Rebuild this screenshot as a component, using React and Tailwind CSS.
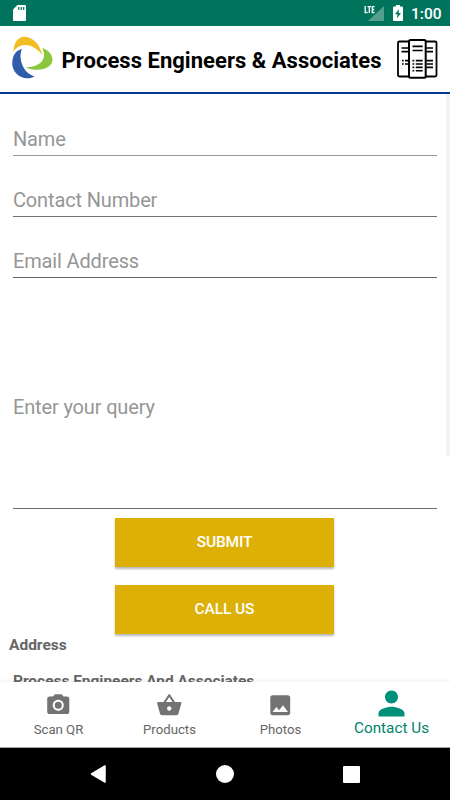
const navItems = [
  {
    label: 'Scan QR',
    path: 'M9 2 7.17 4H4c-1.1 0-2 .9-2 2v12c0 1.1.9 2 2 2h16c1.1 0 2-.9 2-2V6c0-1.1-.9-2-2-2h-3.17L15 2H9zm3 15c-2.76 0-5-2.24-5-5s2.24-5 5-5 5 2.24 5 5-2.24 5-5 5zm0-1.8a3.2 3.2 0 1 0 0-6.4 3.2 3.2 0 0 0 0 6.4z',
  },
  {
    label: 'Products',
    path: 'M17.21 9l-4.38-6.56c-.19-.28-.51-.42-.83-.42-.32 0-.64.14-.83.43L6.79 9H2c-.55 0-1 .45-1 1 0 .09.01.18.04.27l2.54 9.27c.23.84 1 1.46 1.92 1.46h13c.92 0 1.69-.62 1.93-1.46l2.54-9.27L23 10c0-.55-.45-1-1-1h-4.79zM9 9l3-4.4L15 9H9zm3 8c-1.1 0-2-.9-2-2s.9-2 2-2 2 .9 2 2-.9 2-2 2z',
  },
  {
    label: 'Photos',
    path: 'M21 19V5c0-1.1-.9-2-2-2H5c-1.1 0-2 .9-2 2v14c0 1.1.9 2 2 2h14c1.1 0 2-.9 2-2zM8.5 13.5l2.5 3.01L14.5 12l4.5 6H5l3.5-4.5z',
  },
];

function StatusBar() {
  return (
    <div className="flex h-[26px] shrink-0 items-center bg-[#00735c] pl-[13px] pr-[9px] text-white">
      <svg width="13" height="16" viewBox="0 0 13 16">
        <path d="M4.5 0H12a1 1 0 0 1 1 1v14a1 1 0 0 1-1 1H1a1 1 0 0 1-1-1V4.5z" fill="#fff" />
        <path d="M5.8 2v3M8.3 2v3M10.7 2v3" stroke="#00735c" strokeWidth="1.2" />
      </svg>
      <div className="ml-auto flex items-center">
        <svg width="20" height="17" viewBox="0 0 20 17">
          <path d="M20 1v15H4z" fill="#559f8f" />
          <path d="M0 0h11v9H0z" fill="#00735c" />
          <path d="M1.200 1v6.500h2.300M3.500 1.600h3.500M5.300 1.600v6.400M10.500 1.600H8.300v5.900h2.200M8.300 4.500h2" fill="none" stroke="#fff" strokeWidth="1.300" />
        </svg>
        <svg className="ml-[9px]" width="10" height="16" viewBox="0 0 10 16">
          <path d="M3 0h4v1.5h2a1 1 0 0 1 1 1V15a1 1 0 0 1-1 1H1a1 1 0 0 1-1-1V2.5a1 1 0 0 1 1-1h2z" fill="#fff" />
          <path d="M6 4 2 9.3h2.500L4 13.500l4-5.500H5.500z" fill="#00735c" />
        </svg>
        <span className="ml-2 w-[30px] whitespace-nowrap pt-[2px] text-[15.500px] font-medium leading-[26px]">1:00</span>
      </div>
    </div>
  );
}

function Logo() {
  return (
    <svg width="44" height="46" viewBox="0 0 44 46" className="shrink-0">
      <path d="M2.500 15.500C3 6 7 .7 13.700.7c8 0 16 8.300 17.300 18.200C25 10.500 12 3.500 2.500 15.500z" fill="#f1bd20" />
      <path d="M31.300 12c5.700 2 10 6 10.200 11.500C41.500 32 28 37 14.700 31.500 26 31 37.500 25.500 31.300 12z" fill="#8bc63e" />
      <path d="M11 13C7 21 11 37 23.500 40.500 12 46.500.5 37 1.300 26.500 1.600 19.500 4.500 14.500 11 13z" fill="#305dab" />
    </svg>
  );
}

function Brochure() {
  return (
    <svg width="42" height="42" viewBox="0 0 42 42" fill="none" stroke="#000" className="shrink-0">
      <path d="M12 3.500H2.500A1.500 1.500 0 0 0 1 5v32a1.500 1.500 0 0 0 1.500 1.500H12M29 3.500h9A1.500 1.500 0 0 1 39.500 5v32a1.500 1.500 0 0 1-1.500 1.500h-9" strokeWidth="1.800" />
      <rect x="12" y="2" width="16.700" height="37.800" rx="1.500" strokeWidth="2" />
      <path d="M4.500 10H11M4.500 13.600H11M15.500 8.400h10.200M15.500 12.500h10.200M29.500 10H36M29.500 13.600H36M8 22.600h3M8 26h3M18.800 22.600h6.900M18.800 26h6.900M18.800 29.400h6.900M18.800 32.800h6.900M29.500 22.600H36M29.500 26H36M29.500 29.400H36" strokeWidth="1.600" />
      <path d="M5 22.600h1.700M5 26h1.700M15.500 22.600h1.700M15.500 26h1.700M15.500 29.400h1.700M15.500 32.800h1.700" strokeWidth="1.600" />
    </svg>
  );
}

function Field({ label, className }) {
  return (
    <div className={`box-border flex border-b text-[20px] leading-6 tracking-[-0.15px] text-[#969696] ${className}`}>
      <span className="whitespace-nowrap">{label}</span>
    </div>
  );
}

export default function App() {
  return (
    <div className="flex h-[800px] w-[450px] flex-col overflow-hidden bg-white font-['Roboto',sans-serif]">
      <StatusBar />
      <header className="flex h-[68px] shrink-0 items-center border-b-2 border-[#003a90] bg-white px-[11px]">
        <Logo />
        <h1 className="ml-[6.500px] whitespace-nowrap pt-[3px] text-[22px] font-bold leading-[30px] tracking-[0.03px] text-black">Process Engineers &amp; Associates</h1>
        <div className="ml-auto">
          <Brochure />
        </div>
      </header>

      <main className="flex h-[588px] shrink-0 overflow-hidden">
        <div className="flex w-[446px] shrink-0 flex-col">
          <form className="flex flex-col pl-[13px] pr-[9px]">
            <Field label="Name" className="h-[62px] items-end border-[#969696] pb-[4px]" />
            <Field label="Contact Number" className="h-[61px] items-end border-[#737373] pb-[4px]" />
            <Field label="Email Address" className="h-[61px] items-end border-[#656565] pb-[4px]" />
            <Field label="Enter your query" className="h-[231px] items-start border-[#6c6c6c] pt-[117px]" />
            <div className="flex flex-col items-center gap-[18px] pr-px pt-[8.500px]">
              <button type="button" className="h-[49px] w-[219px] bg-[#ddb007] pt-[2px] text-[15.500px] font-medium tracking-[-0.2px] text-white shadow-[0_2px_2px_rgba(0,0,0,0.28)]">SUBMIT</button>
              <button type="button" className="h-[49px] w-[219px] bg-[#ddb007] pt-[2px] text-[15.500px] font-medium tracking-[-0.1px] text-white shadow-[0_2px_2px_rgba(0,0,0,0.28)]">CALL US</button>
            </div>
          </form>
          <div className="flex flex-col pl-[9px] pt-px text-[15.500px] font-bold leading-5 text-[#666]">
            <span>Address</span>
            <span className="pl-[4px] pt-[16px] tracking-[-0.03px]">Process Engineers And Associates</span>
          </div>
        </div>
        <div className="h-[362px] w-1 bg-[#f3f3f3]" />
      </main>

      <nav className="relative flex h-[66px] shrink-0 border-b border-[#9ba6a3] bg-white px-[3px] shadow-[0_-1px_4px_rgba(0,0,0,0.08)]">
        {navItems.map((item) => (
          <div key={item.label} className="flex w-[111px] flex-col items-center pt-[10px] text-[#737373]">
            <svg width="26.500" height="26.500" viewBox="0 0 24 24" fill="currentColor" className="mr-px">
              <path d={item.path} />
            </svg>
            <span className="mt-[2.500px] text-[13.200px] leading-[18px] text-[#666]">{item.label}</span>
          </div>
        ))}
        <div className="flex w-[111px] flex-col items-center pt-[1.500px] text-[#00907a]">
          <svg width="39" height="39" viewBox="0 0 24 24" fill="currentColor">
            <path d="M12 12c2.210 0 4-1.790 4-4s-1.790-4-4-4-4 1.790-4 4 1.790 4 4 4zm0 2c-2.670 0-8 1.340-8 4v2h16v-2c0-2.660-5.330-4-8-4z" />
          </svg>
          <span className="-mt-[5px] whitespace-nowrap text-[15.300px] leading-5 text-[#00846a]">Contact Us</span>
        </div>
      </nav>

      <div className="flex h-[52px] shrink-0 items-center bg-black pl-[90px]">
        <svg width="16" height="18" viewBox="0 0 16 18">
          <path d="M15 1v16L1.500 9z" fill="#fff" stroke="#fff" strokeWidth="1.500" strokeLinejoin="round" />
        </svg>
        <div className="ml-[110px] size-[18px] rounded-full bg-white" />
        <div className="ml-[109px] size-[17px] rounded-[1px] bg-white" />
      </div>
    </div>
  );
}
